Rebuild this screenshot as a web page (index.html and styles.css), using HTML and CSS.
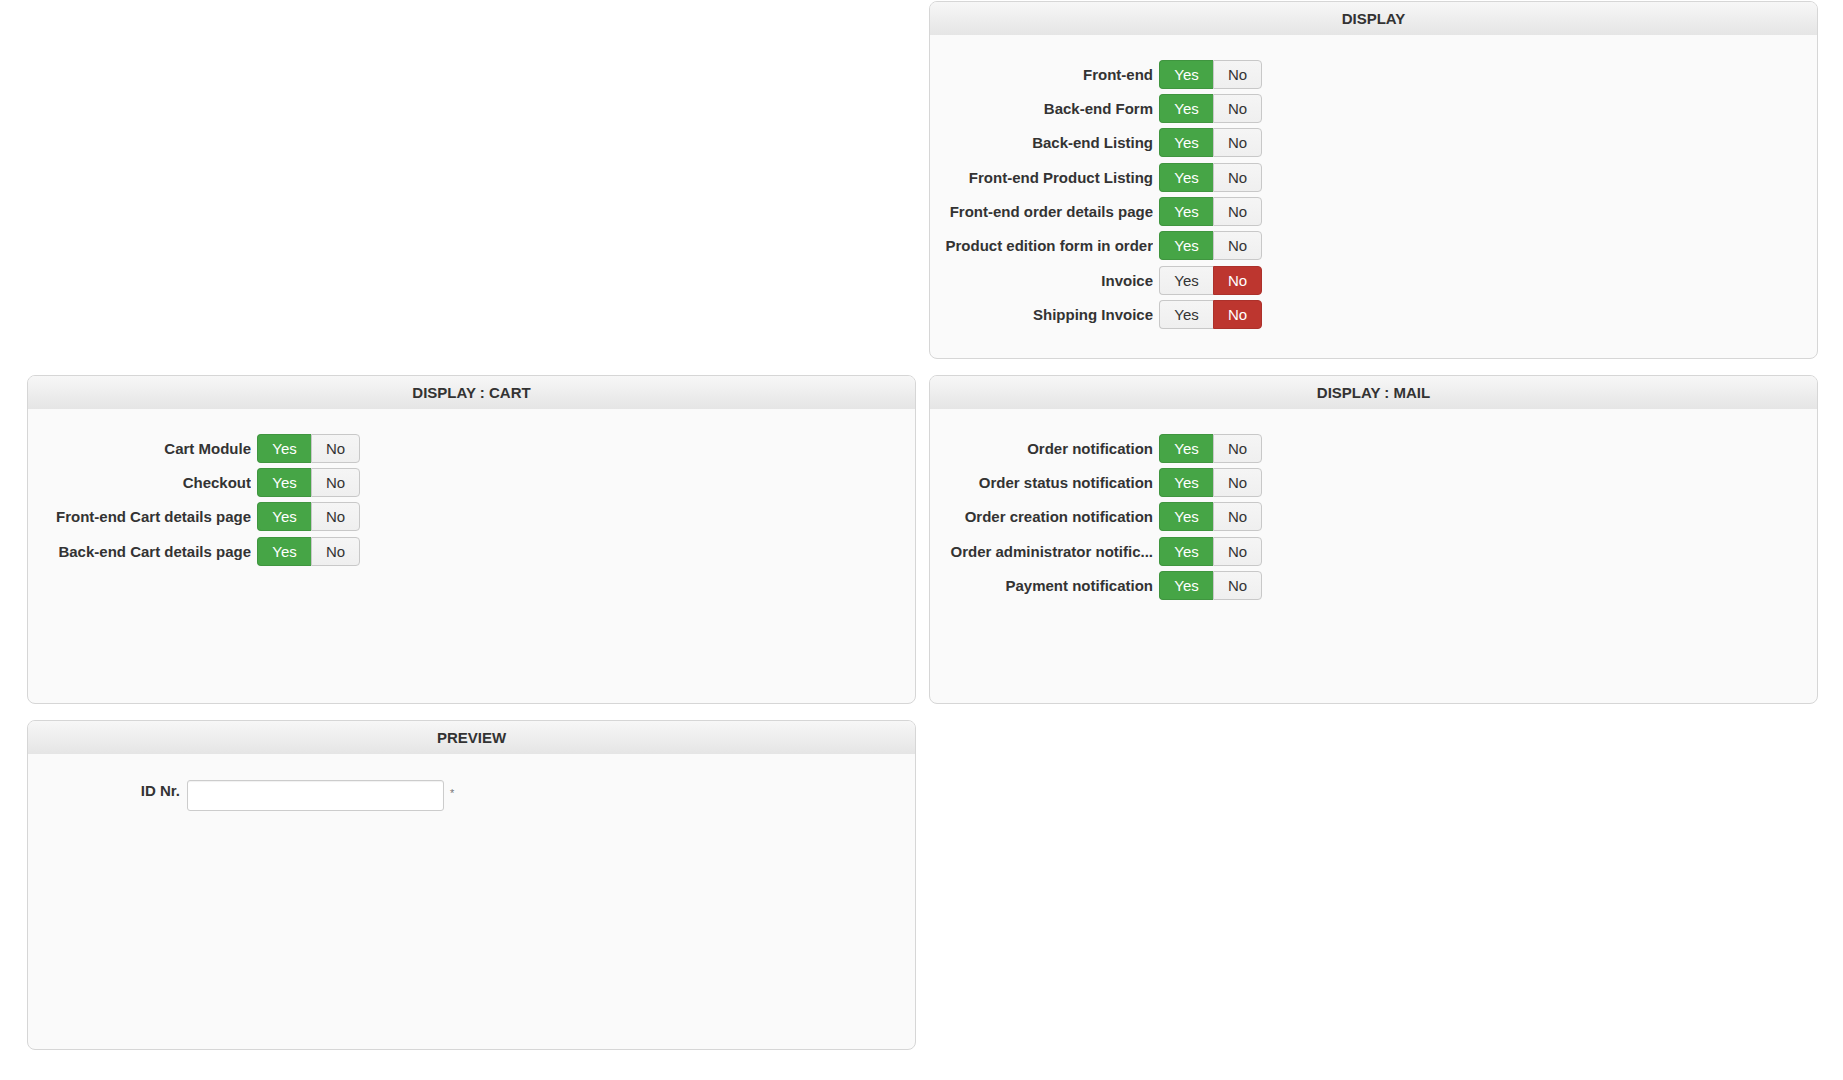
FILE: index.html
```html
<!DOCTYPE html>
<html lang="en">
<head>
    <meta charset="UTF-8">
    <meta name="viewport" content="width=device-width, initial-scale=1.0">
    <title>Display settings</title>
    <link rel="stylesheet" href="styles.css">
</head>
<body>
    <div class="layout">
        <section class="panel panel-display">
            <h3 class="panel-title">DISPLAY</h3>
            <div class="panel-body">
                <div class="field"><label class="field-label">Front-end</label><div class="toggle"><span class="opt yes on">Yes</span><span class="opt no">No</span></div></div>
                <div class="field"><label class="field-label">Back-end Form</label><div class="toggle"><span class="opt yes on">Yes</span><span class="opt no">No</span></div></div>
                <div class="field"><label class="field-label">Back-end Listing</label><div class="toggle"><span class="opt yes on">Yes</span><span class="opt no">No</span></div></div>
                <div class="field"><label class="field-label">Front-end Product Listing</label><div class="toggle"><span class="opt yes on">Yes</span><span class="opt no">No</span></div></div>
                <div class="field"><label class="field-label">Front-end order details page</label><div class="toggle"><span class="opt yes on">Yes</span><span class="opt no">No</span></div></div>
                <div class="field"><label class="field-label">Product edition form in order</label><div class="toggle"><span class="opt yes on">Yes</span><span class="opt no">No</span></div></div>
                <div class="field"><label class="field-label">Invoice</label><div class="toggle"><span class="opt yes">Yes</span><span class="opt no on">No</span></div></div>
                <div class="field"><label class="field-label">Shipping Invoice</label><div class="toggle"><span class="opt yes">Yes</span><span class="opt no on">No</span></div></div>
            </div>
        </section>

        <section class="panel panel-cart">
            <h3 class="panel-title">DISPLAY : CART</h3>
            <div class="panel-body">
                <div class="field"><label class="field-label">Cart Module</label><div class="toggle"><span class="opt yes on">Yes</span><span class="opt no">No</span></div></div>
                <div class="field"><label class="field-label">Checkout</label><div class="toggle"><span class="opt yes on">Yes</span><span class="opt no">No</span></div></div>
                <div class="field"><label class="field-label">Front-end Cart details page</label><div class="toggle"><span class="opt yes on">Yes</span><span class="opt no">No</span></div></div>
                <div class="field"><label class="field-label">Back-end Cart details page</label><div class="toggle"><span class="opt yes on">Yes</span><span class="opt no">No</span></div></div>
            </div>
        </section>

        <section class="panel panel-mail">
            <h3 class="panel-title">DISPLAY : MAIL</h3>
            <div class="panel-body">
                <div class="field"><label class="field-label">Order notification</label><div class="toggle"><span class="opt yes on">Yes</span><span class="opt no">No</span></div></div>
                <div class="field"><label class="field-label">Order status notification</label><div class="toggle"><span class="opt yes on">Yes</span><span class="opt no">No</span></div></div>
                <div class="field"><label class="field-label">Order creation notification</label><div class="toggle"><span class="opt yes on">Yes</span><span class="opt no">No</span></div></div>
                <div class="field"><label class="field-label" title="Order administrator notification">Order administrator notific...</label><div class="toggle"><span class="opt yes on">Yes</span><span class="opt no">No</span></div></div>
                <div class="field"><label class="field-label">Payment notification</label><div class="toggle"><span class="opt yes on">Yes</span><span class="opt no">No</span></div></div>
            </div>
        </section>

        <section class="panel panel-preview">
            <h3 class="panel-title">PREVIEW</h3>
            <div class="panel-body preview-body">
                <div class="field field-input">
                    <label class="field-label short">ID Nr.</label>
                    <input class="text-input" type="text">
                    <span class="required">*</span>
                </div>
            </div>
        </section>
    </div>
</body>
</html>
```

FILE: styles.css
```css
body {
    margin: 0;
    background-color: #fff;
    font-family: 'Liberation Sans', Arial, sans-serif;
    color: #333;
}
.layout {
    display: grid;
    grid-template-columns: 889px 889px;
    column-gap: 13px;
    row-gap: 16px;
    padding: 1px 0 0 27px;
}
.panel {
    box-sizing: border-box;
    border: 1px solid #d6d6d6;
    border-radius: 8px;
    background-color: #fafafa;
    overflow: hidden;
}
.panel-display {
    grid-column: 2;
    grid-row: 1;
    height: 358px;
}
.panel-cart {
    grid-column: 1;
    grid-row: 2;
    height: 329px;
}
.panel-mail {
    grid-column: 2;
    grid-row: 2;
    height: 329px;
}
.panel-preview {
    grid-column: 1;
    grid-row: 3;
    height: 330px;
}
.panel-title {
    margin: 0;
    height: 33px;
    line-height: 33px;
    text-align: center;
    font-size: 15px;
    font-weight: bold;
    color: #333;
    background: linear-gradient(#f7f7f7, #e5e5e5);
}
.panel-body {
    padding: 24.5px 12px;
}
.field {
    display: flex;
    align-items: center;
    gap: 6px;
    margin-bottom: 5.4px;
}
.field-label {
    width: 211px;
    text-align: right;
    font-size: 15px;
    font-weight: bold;
    color: #333;
    white-space: nowrap;
    overflow: hidden;
    text-overflow: ellipsis;
}
.toggle {
    display: flex;
    height: 29px;
}
.opt {
    box-sizing: border-box;
    display: flex;
    align-items: center;
    justify-content: center;
    font-size: 15px;
    color: #333;
    background: linear-gradient(#f5f5f5, #efefef);
    border: 1px solid #c8c8c8;
}
.opt.yes {
    width: 54px;
    border-radius: 4px 0 0 4px;
    border-right: none;
}
.opt.no {
    width: 49px;
    border-radius: 0 4px 4px 0;
}
.opt.yes.on {
    background: #46a546;
    border-color: #3f953f;
    color: #fff;
}
.opt.no.on {
    background: #bd362f;
    border-color: #ac312b;
    color: #fff;
}
.preview-body {
    padding-top: 26px;
}
.field-input {
    align-items: flex-start;
    gap: 7px;
}
.field-label.short {
    width: 140px;
    padding-top: 2px;
}
.text-input {
    box-sizing: border-box;
    width: 257px;
    height: 31px;
    margin: 0;
    border: 1px solid #ccc;
    border-radius: 3px;
    background-color: #fff;
    box-shadow: inset 0 1px 1px rgba(0, 0, 0, 0.06);
}
.required {
    margin-left: -1px;
    padding-top: 7px;
    font-size: 11px;
    color: #777;
}
```
